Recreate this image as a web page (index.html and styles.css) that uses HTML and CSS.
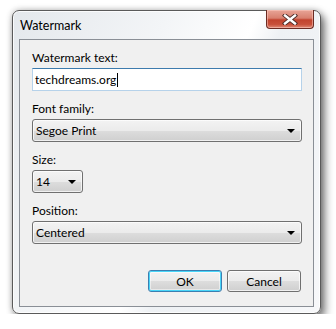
FILE: index.html
```html
<!DOCTYPE html>
<html lang="en">
<head>
    <meta charset="UTF-8">
    <title>Watermark</title>
    <link rel="stylesheet" href="styles.css">
</head>
<body>
    <div class="window">
        <div class="titlebar">
            <span class="title">Watermark</span>
            <div class="close">
                <svg width="16" height="11" viewBox="0 0 16 11">
                    <path d="M3 1.5 L13 9.5 M13 1.5 L3 9.5" stroke="#4a2a26" stroke-width="4.2" stroke-linecap="square"/>
                    <path d="M3 1.5 L13 9.5 M13 1.5 L3 9.5" stroke="#ffffff" stroke-width="2.4" stroke-linecap="square"/>
                </svg>
            </div>
        </div>
        <div class="content">
            <div class="field">
                <div class="label">Watermark text:</div>
                <div class="textbox">techdreams.org<span class="caret"></span></div>
            </div>
            <div class="field">
                <div class="label">Font family:</div>
                <div class="combo wide"><span>Segoe Print</span><i class="arrow"></i></div>
            </div>
            <div class="field">
                <div class="label">Size:</div>
                <div class="combo small"><span>14</span><i class="arrow"></i></div>
            </div>
            <div class="field">
                <div class="label">Position:</div>
                <div class="combo wide"><span>Centered</span><i class="arrow"></i></div>
            </div>
            <div class="buttons">
                <button type="button" class="button default">OK</button>
                <button type="button" class="button">Cancel</button>
            </div>
        </div>
    </div>
</body>
</html>
```

FILE: styles.css
```css
body {
    margin: 0;
    background: #ffffff;
    font-family: Lato, "Noto Sans", sans-serif;
    font-size: 12px;
    color: #000000;
}
.window {
    margin: 10px 0 0 12px;
    border: 1px solid #5a5a5a;
    border-radius: 7px;
    background: linear-gradient(115deg, #e4e8ec 0%, #f3f5f7 35%, #ffffff 55%, #eef1f4 62%, #f7f8fa 100%);
    box-shadow: 4px 5px 9px rgba(0, 0, 0, 0.5), 0 0 6px rgba(0, 0, 0, 0.25), inset 0 0 0 1px rgba(255, 255, 255, 0.8);
    padding: 0 6px 6px 6px;
    box-sizing: border-box;
    width: 309px;
    height: 304px;
    display: flex;
    flex-direction: column;
}
.titlebar {
    height: 28px;
    display: flex;
    justify-content: space-between;
    align-items: flex-start;
}
.title {
    margin-top: 7px;
    margin-left: 1px;
    line-height: 16px;
    font-size: 12.5px;
}
.close {
    width: 46px;
    height: 18px;
    margin-top: -1px;
    border: 1px solid #6b2b23;
    border-top: none;
    border-radius: 0 0 4px 4px;
    background: linear-gradient(#e8a597 0%, #d8806f 45%, #c2432e 55%, #c8503a 80%, #e08a76 100%);
    box-shadow: inset 0 0 0 1px rgba(255, 210, 200, 0.5);
    display: flex;
    align-items: center;
    justify-content: center;
}
.content {
    flex: 1;
    background: #f0f0f0;
    border: 1px solid #8a8f96;
    padding: 10px 11px 0 12px;
    display: flex;
    flex-direction: column;
}
.field {
    margin-bottom: 10px;
}
.label {
    height: 15px;
    line-height: 15px;
    margin-bottom: 3px;
}
.textbox {
    height: 23px;
    box-sizing: border-box;
    background: #ffffff;
    border: 1px solid #b6d2ea;
    border-top-color: #3d7bad;
    padding-left: 2px;
    line-height: 20px;
    display: flex;
    align-items: center;
}
.caret {
    width: 1px;
    height: 14px;
    background: #000000;
    margin-left: 1px;
}
.combo {
    height: 23px;
    box-sizing: border-box;
    border: 1px solid #707070;
    border-radius: 3px;
    background: linear-gradient(#f3f3f3 0%, #ebebeb 50%, #dddddd 51%, #cfcfcf 100%);
    box-shadow: inset 0 0 0 1px rgba(255, 255, 255, 0.7);
    display: flex;
    align-items: center;
    justify-content: space-between;
    padding: 0 5px 0 3px;
}
.combo.small {
    width: 51px;
}
.arrow {
    width: 0;
    height: 0;
    border-left: 4px solid transparent;
    border-right: 4px solid transparent;
    border-top: 4px solid #000000;
    margin-right: 1px;
}
.buttons {
    margin-top: 16px;
    display: flex;
    justify-content: flex-end;
    gap: 5px;
    padding-right: 1px;
}
.button {
    width: 74px;
    height: 22px;
    font: inherit;
    color: #000000;
    border: 1px solid #707070;
    border-radius: 3px;
    background: linear-gradient(#f2f2f2 0%, #ebebeb 50%, #dddddd 51%, #cfcfcf 100%);
    box-shadow: inset 0 0 0 1px rgba(255, 255, 255, 0.7);
    padding: 0;
    cursor: pointer;
}
.button.default {
    border-color: #3c7fb1;
    box-shadow: inset 0 0 0 1px #48d5f8, inset 0 0 0 2px rgba(255, 255, 255, 0.5);
}
```
